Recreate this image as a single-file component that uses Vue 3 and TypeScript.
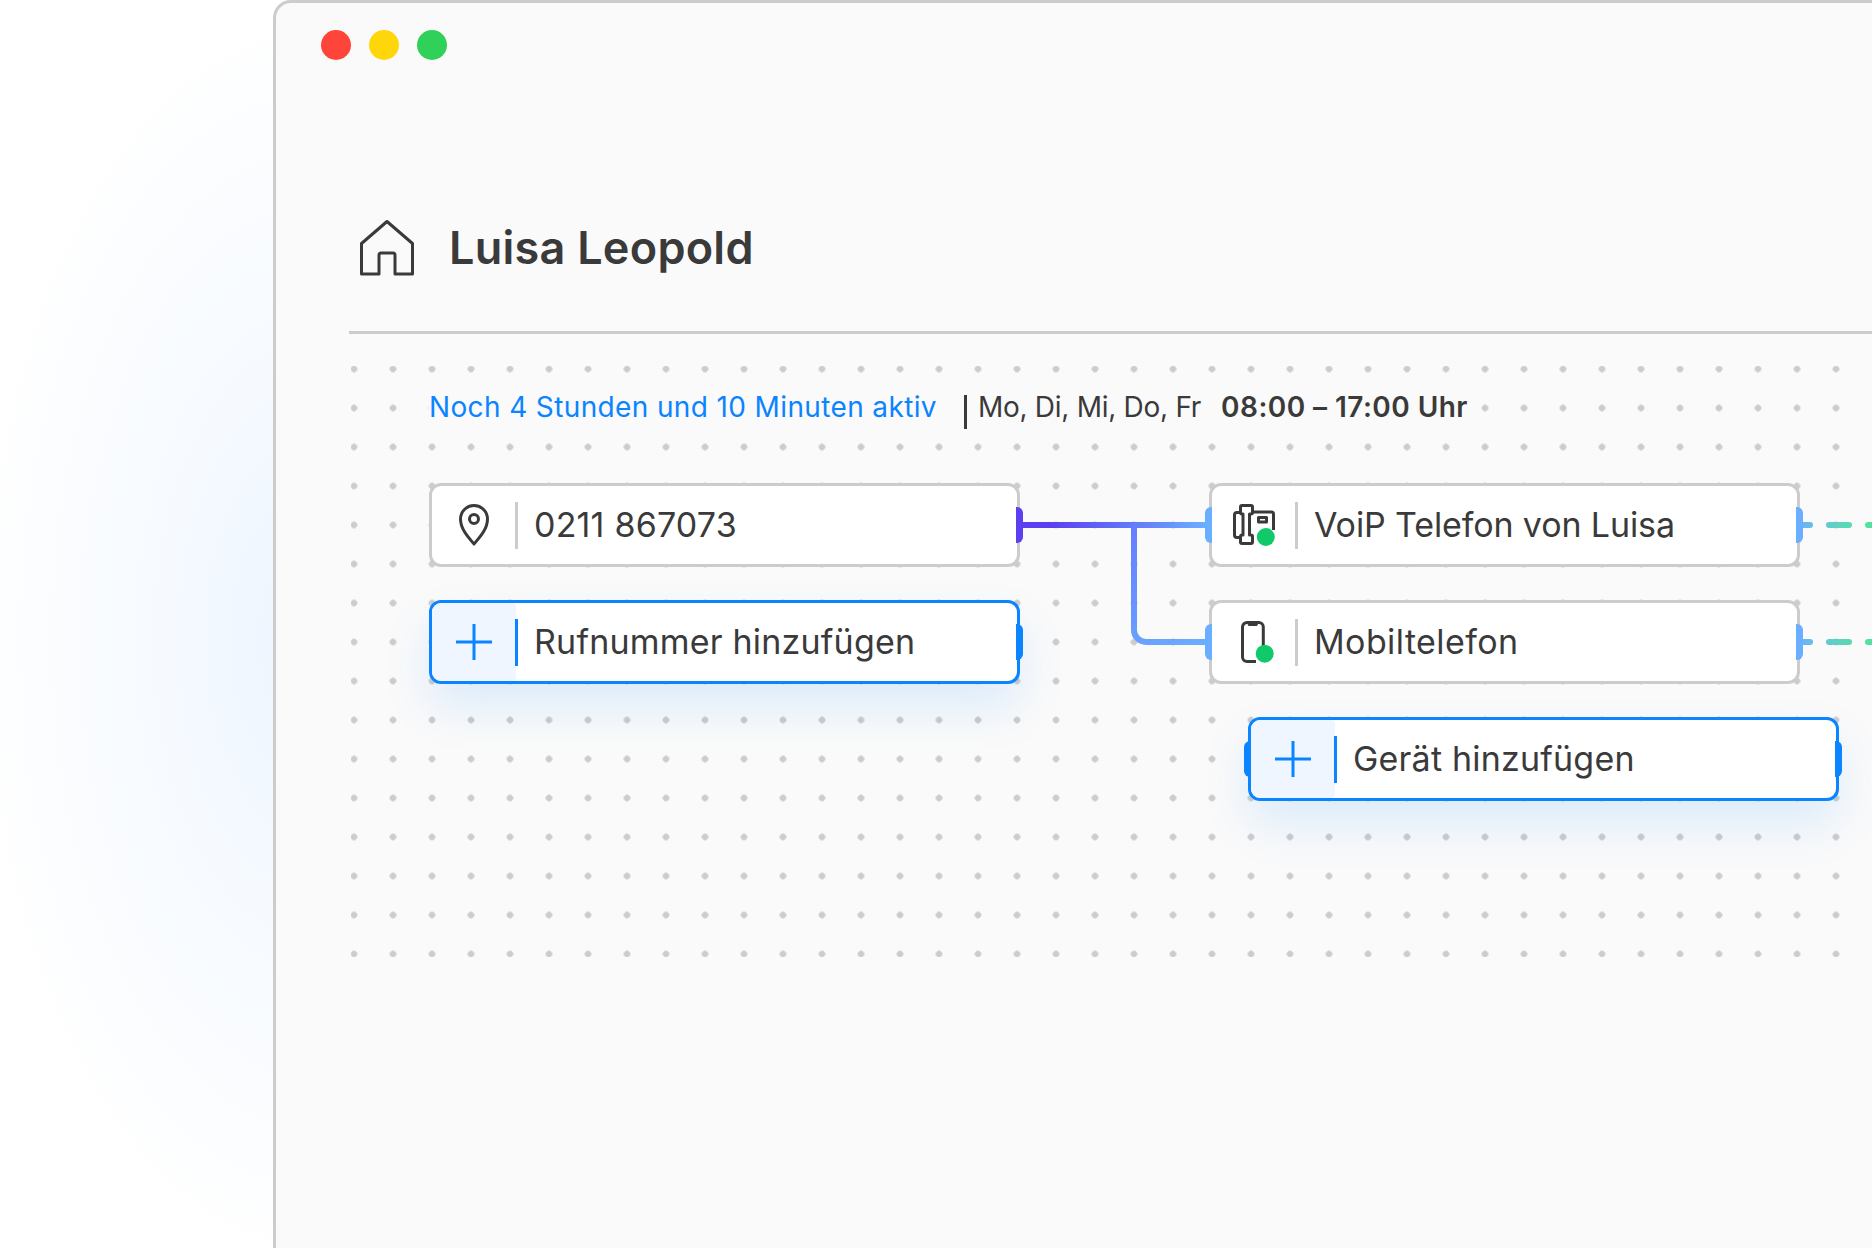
<script setup lang="ts">
interface NodeRow {
  label: string
  kind: 'pin' | 'voip' | 'mobile'
}

const numbers: NodeRow[] = [{ label: '0211 867073', kind: 'pin' }]
const devices: NodeRow[] = [
  { label: 'VoiP Telefon von Luisa', kind: 'voip' },
  { label: 'Mobiltelefon', kind: 'mobile' }
]
</script>

<template>
  <div class="page">
    <div class="window">
      <div class="traffic">
        <span class="light red"></span>
        <span class="light yellow"></span>
        <span class="light green"></span>
      </div>

      <header class="head">
        <svg class="house" width="54" height="56" viewBox="0 0 54 56" fill="none" stroke="#3a3a3a" stroke-width="3" stroke-linejoin="round">
          <path d="M27 1.5L52.5 23.5V54H35V35a2 2 0 0 0-2-2H21a2 2 0 0 0-2 2V54H1.5V23.5Z" />
        </svg>
        <h1>Luisa Leopold</h1>
      </header>

      <section class="board">
        <div class="schedule">
          <span class="remaining">Noch 4 Stunden und 10 Minuten aktiv</span>
          <span class="bar"></span>
          <span class="days">Mo, Di, Mi, Do, Fr</span>
          <span class="hours">08:00 – 17:00 Uhr</span>
        </div>

        <div class="columns">
          <div class="col">
            <div v-for="n in numbers" :key="n.label" class="node">
              <div class="node-icon">
                <svg width="42" height="42" viewBox="0 0 42 42" fill="none" stroke="#3a3a3a" stroke-width="3" stroke-linejoin="round">
                  <path d="M21 40C15 33 7.5 25 7.5 15A13.5 13.5 0 0 1 34.5 15C34.5 25 27 33 21 40Z" />
                  <circle cx="21" cy="15" r="4.5" />
                </svg>
              </div>
              <span class="node-sep"></span>
              <span class="node-label">{{ n.label }}</span>
              <span class="handle out purple"></span>
            </div>
            <div class="node add">
              <div class="node-icon">
                <svg width="36" height="36" viewBox="0 0 36 36" stroke="#0a84ff" stroke-width="3">
                  <path d="M18 0V36M0 18H36" />
                </svg>
              </div>
              <span class="node-sep"></span>
              <span class="node-label">Rufnummer hinzufügen</span>
              <span class="handle out"></span>
            </div>
          </div>

          <div class="col">
            <div v-for="d in devices" :key="d.label" class="node">
              <div class="node-icon">
                <svg v-if="d.kind === 'voip'" width="42" height="42" viewBox="0 0 42 42" fill="none" stroke="#3a3a3a" stroke-width="3" stroke-linejoin="round">
                  <path d="M9 1.5h9a1.5 1.5 0 0 1 1.5 1.5v5.5a1.5 1.5 0 0 1-1.5 1.5h-1.5v21h1.5a1.5 1.5 0 0 1 1.5 1.5v5.5a1.5 1.5 0 0 1-1.5 1.5h-9a1.5 1.5 0 0 1-1.5-1.5v-5.5a1.5 1.5 0 0 1 1.5-1.5h1v-21h-1a1.5 1.5 0 0 1-1.5-1.5v-5.5a1.5 1.5 0 0 1 1.5-1.5z" />
                  <path d="M7.5 8.5H4a2.5 2.5 0 0 0-2.5 2.5v20a2.5 2.5 0 0 0 2.5 2.5h3.5" />
                  <path d="M19 8h19.5a2 2 0 0 1 2 2v16" />
                  <rect x="25.5" y="13.5" width="8" height="4.5" />
                  <circle cx="32.8" cy="33" r="9" fill="#10c96a" stroke="none" />
                </svg>
                <svg v-else width="42" height="42" viewBox="0 0 42 42" fill="none" stroke="#3a3a3a" stroke-width="3" stroke-linejoin="round">
                  <path d="M30.3 26V6a4.5 4.5 0 0 0-4.5-4.5H14a4.5 4.5 0 0 0-4.5 4.5V36a4.5 4.5 0 0 0 4.5 4.5H23" />
                  <path d="M14 2h11.5l-1.5 3h-8.5z" fill="#3a3a3a" stroke="none" />
                  <circle cx="31.7" cy="32.7" r="9" fill="#10c96a" stroke="none" />
                </svg>
              </div>
              <span class="node-sep"></span>
              <span class="node-label" :class="d.kind">{{ d.label }}</span>
              <span class="handle in light-blue"></span>
              <span class="handle out light-blue"></span>
            </div>
            <div class="node add shifted">
              <div class="node-icon">
                <svg width="36" height="36" viewBox="0 0 36 36" stroke="#0a84ff" stroke-width="3">
                  <path d="M18 0V36M0 18H36" />
                </svg>
              </div>
              <span class="node-sep"></span>
              <span class="node-label">Gerät hinzufügen</span>
              <span class="handle in"></span>
              <span class="handle out"></span>
            </div>
          </div>
        </div>

        <!-- connectors, drawn in board coordinates -->
        <svg class="wires" width="1521" height="300" viewBox="0 0 1521 300" fill="none" stroke-width="6">
          <defs>
            <linearGradient id="wireMain" gradientUnits="userSpaceOnUse" x1="672" y1="0" x2="855" y2="0">
              <stop offset="0.15" stop-color="#5b3ff0" />
              <stop offset="1" stop-color="#6aaeff" />
            </linearGradient>
            <linearGradient id="wireDrop" gradientUnits="userSpaceOnUse" x1="780" y1="159" x2="855" y2="276">
              <stop offset="0" stop-color="#667cff" />
              <stop offset="1" stop-color="#6aaeff" />
            </linearGradient>
            <linearGradient id="wireOut" gradientUnits="userSpaceOnUse" x1="1452" y1="0" x2="1521" y2="0">
              <stop offset="0" stop-color="#6cb4f4" />
              <stop offset="0.5" stop-color="#5dd3c0" />
              <stop offset="1" stop-color="#52e39a" />
            </linearGradient>
          </defs>
          <path d="M672 159H855" stroke="url(#wireMain)" />
          <path d="M783 159V264a12 12 0 0 0 12 12H855" stroke="url(#wireDrop)" />
          <path d="M1452 159h7" stroke="url(#wireOut)" stroke-linecap="round" />
          <path d="M1478 159h20" stroke="url(#wireOut)" stroke-linecap="round" />
          <path d="M1517 159h20" stroke="url(#wireOut)" stroke-linecap="round" />
          <path d="M1452 276h7" stroke="url(#wireOut)" stroke-linecap="round" />
          <path d="M1478 276h20" stroke="url(#wireOut)" stroke-linecap="round" />
          <path d="M1517 276h20" stroke="url(#wireOut)" stroke-linecap="round" />
        </svg>
      </section>
    </div>
  </div>
</template>

<style scoped>
.page {
  position: relative;
  width: 1872px;
  height: 1248px;
  overflow: hidden;
  background:
    radial-gradient(ellipse 340px 640px at 310px 640px, #ecf5ff 0%, #f6faff 45%, rgba(250, 252, 255, 0.8) 75%, rgba(255, 255, 255, 0) 100%),
    #fff;
  font-family: Inter, "Liberation Sans", sans-serif;
  color: #3a3a3a;
}

.window {
  box-sizing: border-box;
  width: 1640px;
  height: 1290px;
  margin-left: 273px;
  background: #fafafa;
  border: 3px solid #ccc;
  border-radius: 18px 0 0 0;
}

.traffic {
  display: flex;
  gap: 18px;
  padding: 27px 0 0 45px;
}

.light {
  width: 30px;
  height: 30px;
  border-radius: 50%;
}

.red { background: #ff453a; }
.yellow { background: #ffd60a; }
.green { background: #30d158; }

.head {
  display: flex;
  align-items: center;
  gap: 35px;
  box-sizing: border-box;
  height: 274px;
  margin-left: 73px;
  padding: 105px 0 0 11px;
  border-bottom: 3px solid #ccc;
}

.house {
  flex: none;
}

h1 {
  margin: 0;
  font-size: 45px;
  font-weight: 600;
  line-height: 56px;
  letter-spacing: 0.25px;
}

.board {
  position: relative;
  box-sizing: border-box;
  width: 1491px;
  height: 591px;
  margin: 32px 0 0 75px;
  padding: 21px 0 0 78px;
  background-image: radial-gradient(circle, #ccc 3px, rgba(204, 204, 204, 0) 3.6px);
  background-size: 39px 39px;
  background-position: -16.5px -16.5px;
}

.schedule {
  display: flex;
  align-items: center;
  width: max-content;
  height: 40px;
  margin-bottom: 56px;
  background: #fafafa;
  font-size: 28px;
  line-height: 40px;
}

.remaining {
  color: #0a84ff;
  letter-spacing: 0.37px;
}

.bar {
  width: 3px;
  height: 34px;
  margin: 10px 11px 0 27px;
  background: #3a3a3a;
}

.days {
  letter-spacing: -0.28px;
}

.hours {
  margin-left: 20px;
  font-weight: 600;
  letter-spacing: 0.45px;
}

.columns {
  position: relative;
  z-index: 1;
  display: flex;
  gap: 189px;
}

.col {
  display: flex;
  flex-direction: column;
  gap: 33px;
  width: 591px;
}

.node {
  position: relative;
  box-sizing: border-box;
  display: flex;
  align-items: center;
  height: 84px;
  width: 591px;
  background: #fff;
  border: 3px solid #ccc;
  border-radius: 12px;
}

.node.add {
  border-color: #0a84ff;
  box-shadow: 0 24px 48px rgba(10, 132, 255, 0.12);
}

.node.shifted {
  margin-left: 39px;
}

.node-icon {
  flex: none;
  display: flex;
  align-items: center;
  justify-content: center;
  width: 84px;
  height: 78px;
  border-radius: 9px 0 0 9px;
}

.add .node-icon {
  background: #eff6ff;
  border-radius: 9px 4px 4px 9px;
}

.node-sep {
  flex: none;
  width: 3px;
  height: 47px;
  margin-left: -1px;
  margin-right: 16px;
  background: #ccc;
}

.add .node-sep {
  background: #0a84ff;
}

.node-label {
  padding-bottom: 2px;
  font-size: 34px;
  letter-spacing: 0.2px;
  white-space: nowrap;
}

.node-label.voip { letter-spacing: -0.12px; }
.node-label.mobile { letter-spacing: 0.4px; }

.handle {
  position: absolute;
  top: 21px;
  width: 7px;
  height: 36px;
  background: #0a84ff;
}

.handle.out {
  right: -6px;
  border-radius: 0 6px 6px 0;
}

.handle.in {
  left: -7px;
  border-radius: 6px 0 0 6px;
}

.handle.purple { background: #5b3ff0; }
.handle.light-blue { background: #6aaeff; }

.wires {
  position: absolute;
  left: 0;
  top: 0;
  z-index: 0;
  overflow: visible;
}
</style>

<style>
html,
body {
  margin: 0;
  background: #fff;
}
</style>
